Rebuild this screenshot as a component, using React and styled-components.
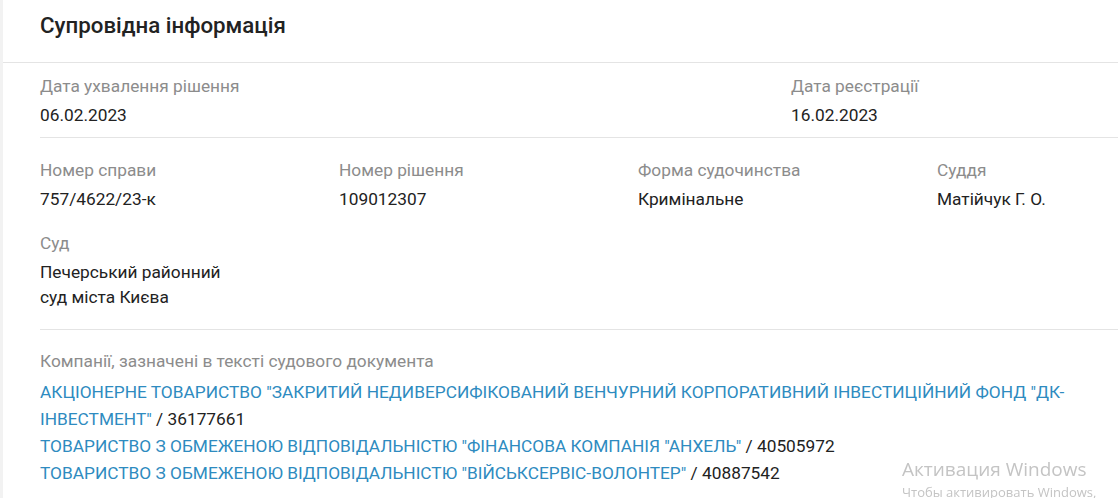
import React from 'react';
import styled, { createGlobalStyle } from 'styled-components';

const GlobalStyle = createGlobalStyle`
  html, body {
    margin: 0;
    padding: 0;
    background: #f2f2f2;
  }
  body {
    font-family: Roboto, "Liberation Sans", Arial, sans-serif;
    color: #222;
  }
`;

const Panel = styled.section`
  margin-left: 3px;
  background: #fff;
  min-height: 498px;
  overflow: hidden;
`;

const PanelHeader = styled.header`
  height: 63px;
  box-sizing: border-box;
  padding: 12px 0 0 37px;
  border-bottom: 1px solid #e4e4e4;
`;

const Title = styled.h2`
  margin: 0;
  font-size: 22.3px;
  line-height: 26px;
  font-weight: 500;
  color: #222;
`;

const Body = styled.div`
  padding-left: 37px;
`;

const Section = styled.div`
  display: grid;
  grid-template-columns: ${(p) => p.$columns};
  row-gap: 18px;
  padding: ${(p) => p.$padding};
  border-bottom: ${(p) => (p.$divider ? '1px solid #e4e4e4' : 'none')};
`;

const Field = styled.div`
  display: flex;
  flex-direction: column;
  gap: 4px;
`;

const Label = styled.span`
  font-size: 17.3px;
  line-height: 26px;
  color: #8c8c8c;
`;

const Value = styled.span`
  font-size: 17.3px;
  line-height: 25px;
  color: #222;
`;

const Companies = styled.div`
  padding: 18px 40px 0 0;
`;

const CompanyList = styled.ul`
  list-style: none;
  margin: 5px 0 0;
  padding: 0;
  font-size: 17.3px;
  line-height: 27px;
  color: #222;
`;

const CompanyLink = styled.a`
  color: #2e8bc0;
  text-decoration: none;
`;

const Watermark = styled.div`
  position: fixed;
  left: 902px;
  top: 456px;
  font-family: "Open Sans", "Noto Sans", sans-serif;
  color: #c4c4c4;
  pointer-events: none;
  white-space: nowrap;
`;

const WatermarkTitle = styled.div`
  font-size: 19px;
  line-height: 27px;
`;

const WatermarkNote = styled.div`
  font-size: 13px;
  line-height: 18px;
`;

const companies = [
  {
    name: 'АКЦІОНЕРНЕ ТОВАРИСТВО "ЗАКРИТИЙ НЕДИВЕРСИФІКОВАНИЙ ВЕНЧУРНИЙ КОРПОРАТИВНИЙ ІНВЕСТИЦІЙНИЙ ФОНД "ДК-ІНВЕСТМЕНТ"',
    code: '36177661',
  },
  { name: 'ТОВАРИСТВО З ОБМЕЖЕНОЮ ВІДПОВІДАЛЬНІСТЮ "ФІНАНСОВА КОМПАНІЯ "АНХЕЛЬ"', code: '40505972' },
  { name: 'ТОВАРИСТВО З ОБМЕЖЕНОЮ ВІДПОВІДАЛЬНІСТЮ "ВІЙСЬКСЕРВІС-ВОЛОНТЕР"', code: '40887542' },
];

const caseFields = [
  { label: 'Номер справи', value: '757/4622/23-к' },
  { label: 'Номер рішення', value: '109012307' },
  { label: 'Форма судочинства', value: 'Кримінальне' },
  { label: 'Суддя', value: 'Матійчук Г. О.' },
];

const App = () => (
  <>
    <GlobalStyle />
    <Panel>
      <PanelHeader>
        <Title>Супровідна інформація</Title>
      </PanelHeader>
      <Body>
        <Section $columns="751px 1fr" $padding="10px 0 9px" $divider>
          <Field>
            <Label>Дата ухвалення рішення</Label>
            <Value>06.02.2023</Value>
          </Field>
          <Field>
            <Label>Дата реєстрації</Label>
            <Value>16.02.2023</Value>
          </Field>
        </Section>
        <Section $columns="repeat(4, 299px)" $padding="19px 0 19px" $divider>
          {caseFields.map(({ label, value }) => (
            <Field key={label}>
              <Label>{label}</Label>
              <Value>{value}</Value>
            </Field>
          ))}
          <Field>
            <Label>Суд</Label>
            <Value>
              Печерський районний
              <br />
              суд міста Києва
            </Value>
          </Field>
        </Section>
        <Companies>
          <Label>Компанії, зазначені в тексті судового документа</Label>
          <CompanyList>
            {companies.map(({ name, code }) => (
              <li key={code}>
                <CompanyLink href="#">{name}</CompanyLink> / {code}
              </li>
            ))}
          </CompanyList>
        </Companies>
      </Body>
    </Panel>
    <Watermark>
      <WatermarkTitle>Активация Windows</WatermarkTitle>
      <WatermarkNote>Чтобы активировать Windows,</WatermarkNote>
    </Watermark>
  </>
);

export default App;
